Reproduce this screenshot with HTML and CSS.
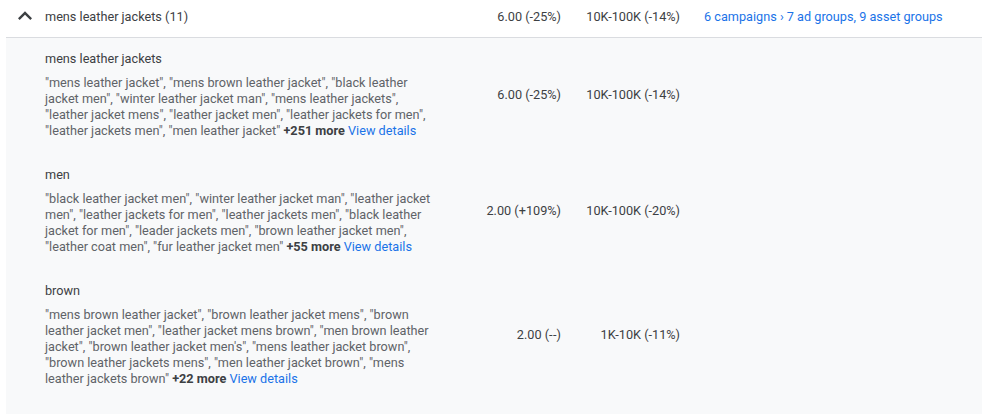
FILE: index.html
```html
<!DOCTYPE html>
<html lang="en">
<head>
<meta charset="utf-8">
<title>Keyword themes</title>
<link rel="stylesheet" href="styles.css">
</head>
<body>
<div class="table">
  <div class="head">
    <div class="icon-cell">
      <svg class="chev" viewBox="0 0 24 24" width="28" height="28" aria-hidden="true"><path d="M12 8l-6 6 1.41 1.41L12 10.83l4.59 4.58L18 14z"/></svg>
    </div>
    <div class="head-title">mens leather jackets (11)</div>
    <div class="num">6.00 (-25%)</div>
    <div class="num">10K-100K (-14%)</div>
    <div class="links"><a href="#">6 campaigns › 7 ad groups, 9 asset groups</a></div>
  </div>
  <div class="body">
    <div class="row">
      <div class="theme">
        <div class="theme-title">mens leather jackets</div>
        <div class="kw">"mens leather jacket", "mens brown leather jacket", "black leather jacket men", "winter leather jacket man", "mens leather jackets", "leather jacket mens", "leather jacket men", "leather jackets for men", "leather jackets men", "men leather jacket" <b>+251 more</b> <a href="#">View details</a></div>
      </div>
      <div class="num">6.00 (-25%)</div>
      <div class="num">10K-100K (-14%)</div>
      <div></div>
    </div>
    <div class="row">
      <div class="theme">
        <div class="theme-title">men</div>
        <div class="kw">"black leather jacket men", "winter leather jacket man", "leather jacket men", "leather jackets for men", "leather jackets men", "black leather jacket for men", "leader jackets men", "brown leather jacket men", "leather coat men", "fur leather jacket men" <b>+55 more</b> <a href="#">View details</a></div>
      </div>
      <div class="num">2.00 (+109%)</div>
      <div class="num">10K-100K (-20%)</div>
      <div></div>
    </div>
    <div class="row">
      <div class="theme">
        <div class="theme-title">brown</div>
        <div class="kw">"mens brown leather jacket", "brown leather jacket mens", "brown leather jacket men", "leather jacket mens brown", "men brown leather jacket", "brown leather jacket men's", "mens leather jacket brown", "brown leather jackets mens", "men leather jacket brown", "mens leather jackets brown" <b>+22 more</b> <a href="#">View details</a></div>
      </div>
      <div class="num"><span>2.00 (-</span><span>-)</span></div>
      <div class="num">1K-10K (-11%)</div>
      <div></div>
    </div>
  </div>
</div>
</body>
</html>
```

FILE: styles.css
```css
* { box-sizing: border-box; }
html, body { margin: 0; padding: 0; background: #fff; }
body {
  font-family: Roboto, "Liberation Sans", Arial, sans-serif;
  font-size: 12.7px;
  line-height: 16px;
  color: #3c4043;
}
a { color: #1a73e8; text-decoration: none; }

.table {
  margin-left: 6px;
  width: 976px;
}

.head {
  display: grid;
  grid-template-columns: 39px 392px 124px 119px 1fr;
  align-items: center;
  height: 38px;
  padding-bottom: 3px;
  border-bottom: 1px solid #dadce0;
}
.icon-cell { display: flex; align-items: center; }
.chev { fill: #3c4043; margin-left: 5px; margin-top: -2px; display: block; }

.num { text-align: right; white-space: nowrap; color: #3c4043; }
.num span + span { margin-left: 0.5px; }
.links { padding-left: 24px; white-space: nowrap; }

.body {
  background: #f8f9fa;
  padding-bottom: 10px;
}
.row {
  display: grid;
  grid-template-columns: 392px 124px 119px 1fr;
  align-items: center;
  padding: 10px 0 18px 39px;
}
.row:first-child { padding-top: 13px; }
.theme-title { color: #3c4043; margin-bottom: 8px; }
.kw { color: #5f6368; }
.kw b { color: #3c4043; font-weight: 700; }
```
